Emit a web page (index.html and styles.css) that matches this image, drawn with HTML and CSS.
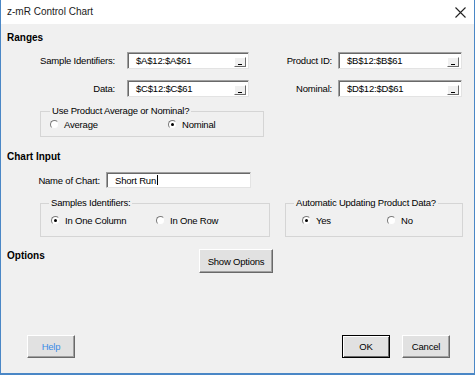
FILE: index.html
```html
<!DOCTYPE html>
<html lang="en">
<head>
  <meta charset="UTF-8">
  <title>z-mR Control Chart</title>
  <link rel="stylesheet" href="styles.css">
</head>
<body>
  <div class="window">
    <div class="titlebar">
      <span class="title">z-mR Control Chart</span>
      <svg class="close" width="11" height="11" viewBox="0 0 11 11">
        <path d="M0.5 0.5 L10.5 10.5 M10.5 0.5 L0.5 10.5" stroke="#222" stroke-width="1.1" fill="none"/>
      </svg>
    </div>

    <div class="content">
      <div class="heading">Ranges</div>

      <div class="fields">
        <label class="field-label">Sample Identifiers:</label>
        <div class="refedit"><span>$A$12:$A$61</span><span class="pick"></span></div>
        <label class="field-label narrow">Product ID:</label>
        <div class="refedit"><span>$B$12:$B$61</span><span class="pick"></span></div>

        <label class="field-label">Data:</label>
        <div class="refedit"><span>$C$12:$C$61</span><span class="pick"></span></div>
        <label class="field-label narrow">Nominal:</label>
        <div class="refedit"><span>$D$12:$D$61</span><span class="pick"></span></div>
      </div>

      <fieldset class="group group-avg">
        <legend>Use Product Average or Nominal?</legend>
        <div class="options">
          <label class="radio w-avg"><span class="dot"></span>Average</label>
          <label class="radio"><span class="dot checked"></span>Nominal</label>
        </div>
      </fieldset>

      <div class="heading heading-chart">Chart Input</div>

      <div class="name-row">
        <label class="name-label">Name of Chart:</label>
        <div class="textbox">Short Run<span class="caret"></span></div>
      </div>

      <div class="group-row">
        <fieldset class="group group-tall group-samples">
          <legend>Samples Identifiers:</legend>
          <div class="options">
            <label class="radio w-col"><span class="dot checked"></span>In One Column</label>
            <label class="radio"><span class="dot"></span>In One Row</label>
          </div>
        </fieldset>

        <fieldset class="group group-tall group-auto">
          <legend>Automatic Updating Product Data?</legend>
          <div class="options">
            <label class="radio w-yes"><span class="dot checked"></span>Yes</label>
            <label class="radio"><span class="dot"></span>No</label>
          </div>
        </fieldset>
      </div>

      <div class="options-row">
        <div class="heading">Options</div>
        <button class="btn btn-show">Show Options</button>
      </div>

      <div class="footer">
        <button class="btn btn-help">Help</button>
        <div class="spacer"></div>
        <button class="btn btn-default">OK</button>
        <button class="btn">Cancel</button>
      </div>
    </div>
  </div>
</body>
</html>
```

FILE: styles.css
```css
* {
  box-sizing: border-box;
  margin: 0;
  padding: 0;
}

body {
  font-family: 'Liberation Sans', Arial, sans-serif;
  font-size: 9.5px;
  letter-spacing: -0.2px;
  color: #000;
  background-color: #ffffff;
}

.window {
  width: 475px;
  height: 375px;
  display: flex;
  flex-direction: column;
  background-color: #f0f0f0;
  border: 1px solid #4a87c6;
  border-top: none;
  border-bottom-width: 2px;
}

.titlebar {
  height: 24px;
  flex: none;
  display: flex;
  align-items: center;
  padding: 0 7px 0 6px;
  background-color: #ffffff;
}

.title {
  font-size: 10px;
  letter-spacing: 0;
  color: #1b1b1b;
  line-height: 12px;
}

.close {
  margin-left: auto;
  margin-right: 1px;
}

.content {
  flex: 1;
  display: flex;
  flex-direction: column;
  padding: 8px 0 15px 6px;
}

.heading {
  font-size: 10px;
  letter-spacing: 0;
  font-weight: bold;
  line-height: 12px;
  height: 12px;
}

.heading-chart {
  margin-top: 14px;
}

/* Ranges grid */
.fields {
  display: grid;
  grid-template-columns: 120px 122px 89px 124px;
  grid-auto-rows: 17px;
  row-gap: 11px;
  margin-top: 8px;
}

.field-label {
  display: flex;
  align-items: center;
  justify-content: flex-end;
  padding-right: 12px;
}

.field-label.narrow {
  padding-right: 6px;
}

.refedit,
.textbox {
  display: flex;
  align-items: center;
  background-color: #ffffff;
  border: 1px solid;
  border-color: #a0a0a0 #e3e3e3 #e3e3e3 #a0a0a0;
  box-shadow: inset 1px 1px 0 #696969;
  padding: 0 2px 0 8px;
}

.refedit .pick {
  margin-left: auto;
  align-self: flex-end;
  margin-bottom: 1px;
  width: 12px;
  height: 10px;
  background-color: #f0f0f0;
  border: 1px solid;
  border-color: #ffffff #696969 #696969 #ffffff;
  position: relative;
}

.refedit .pick::after {
  content: '';
  position: absolute;
  left: 3px;
  bottom: 1px;
  width: 4px;
  height: 1px;
  background-color: #000;
}

/* group boxes */
.group {
  border: 1px solid #d5d5d5;
  padding: 0 0 6px 9px;
}

.group legend {
  padding: 0 2px;
  line-height: 12px;
}

.options {
  display: flex;
  align-items: center;
  height: 12px;
  margin-top: 1px;
}

.group-tall {
  padding-bottom: 10px;
}

.group-tall .options {
  margin-top: 5px;
}

.radio {
  display: flex;
  align-items: center;
  gap: 5px;
}

.dot {
  width: 9px;
  height: 9px;
  border-radius: 50%;
  border: 1px solid;
  border-color: #7a7a7a #f0f0f0 #f0f0f0 #7a7a7a;
  background-color: #ffffff;
  display: flex;
  align-items: center;
  justify-content: center;
}

.dot.checked::after {
  content: '';
  width: 3px;
  height: 3px;
  border-radius: 50%;
  background-color: #000;
}

.group-avg {
  width: 224px;
  margin: 8px 0 0 33px;
}

.w-avg { width: 118px; }

.name-row {
  display: flex;
  align-items: center;
  margin-top: 9px;
  height: 16px;
}

.name-label {
  width: 93px;
  text-align: right;
  margin-right: 6px;
}

.textbox {
  width: 145px;
  height: 16px;
}

.caret {
  width: 1px;
  height: 10px;
  background-color: #000;
  margin-left: 1px;
}

.group-row {
  display: flex;
  gap: 15px;
  margin: 9px 0 0 33px;
}

.group-samples {
  width: 230px;
  padding-left: 8px;
}

.group-samples .options {
  padding-left: 2px;
}

.w-col { width: 105px; }

.group-auto {
  width: 178px;
  padding-left: 8px;
}

.group-auto .options {
  padding-left: 8px;
}

.w-yes { width: 85px; }

.options-row {
  display: flex;
  align-items: flex-start;
  margin-top: 12px;
}

.options-row .heading {
  width: 192px;
  margin-top: 1px;
}

/* buttons */
.btn {
  font-family: inherit;
  font-size: 9.5px;
  letter-spacing: -0.2px;
  height: 23px;
  background-color: #e1e1e1;
  border: 1px solid;
  border-color: #ffffff #696969 #696969 #ffffff;
  box-shadow: inset -1px -1px 0 #a0a0a0;
  color: #000;
}

.btn-show {
  width: 74px;
  height: 24px;
}

.footer {
  margin-top: auto;
  display: flex;
  align-items: center;
  gap: 12px;
  padding-right: 24px;
}

.footer .btn {
  width: 48px;
}

.btn-help {
  margin-left: 20px;
  color: #3c8ce6;
}

.spacer {
  flex: 1;
}

.btn-default {
  border-color: #000;
  box-shadow: inset 1px 1px 0 #ffffff, inset -1px -1px 0 #696969;
}
```
